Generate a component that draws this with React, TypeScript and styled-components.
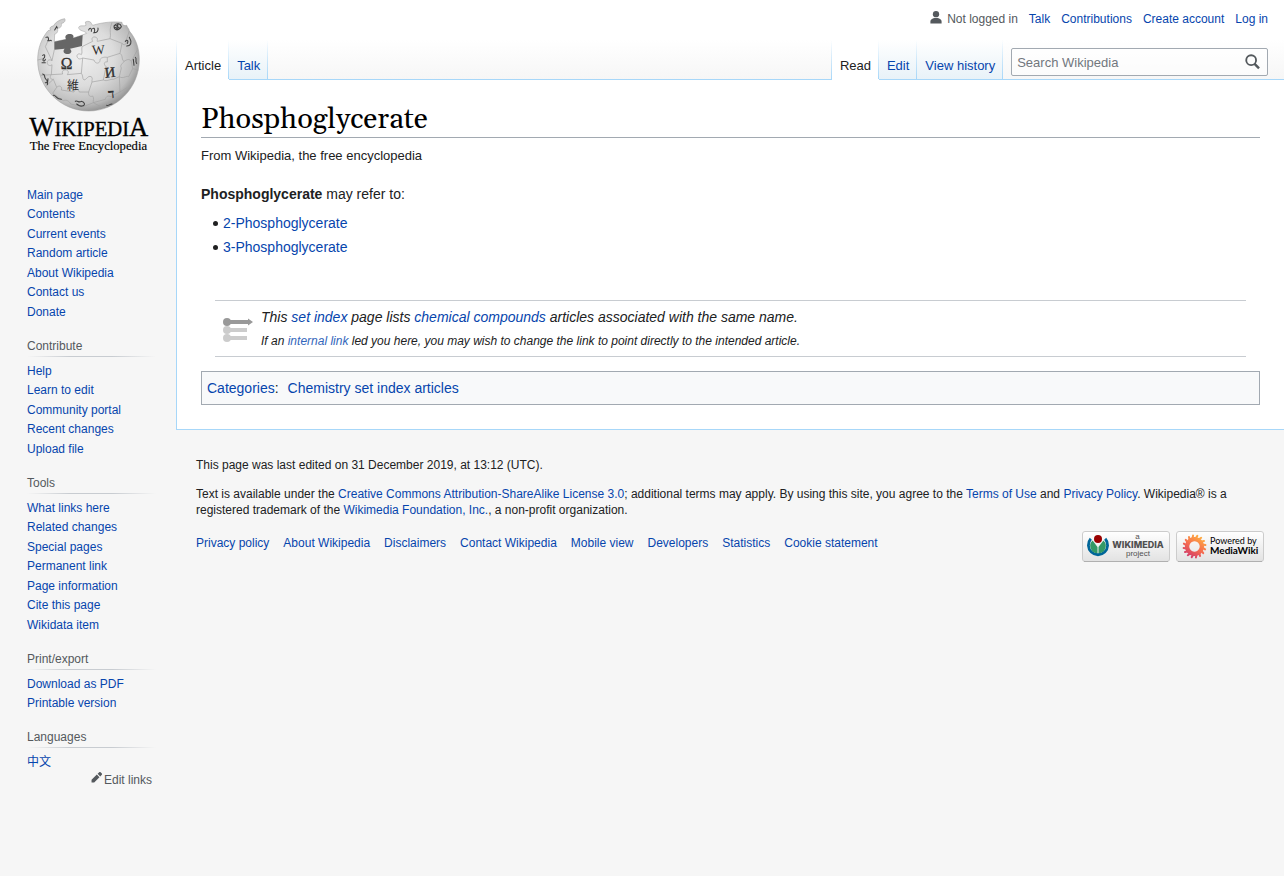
import React from "react";
import styled, { createGlobalStyle, css } from "styled-components";

const GlobalStyle = createGlobalStyle`
  body {
    margin: 0;
    background: #f6f6f6;
    color: #202122;
    font-family: "Liberation Sans", Arial, "Noto Sans CJK SC", sans-serif;
    font-size: 14px;
    line-height: 22px;
  }
`;

const Link = styled.a<{ $external?: boolean }>`
  color: ${(p) => (p.$external ? "#3366bb" : "#0645ad")};
  text-decoration: none;
  &:hover {
    text-decoration: underline;
  }
`;

const Page = styled.div`
  display: grid;
  grid-template-columns: 176px minmax(0, 1fr);
  align-items: start;
  min-height: 100vh;
  background: linear-gradient(#ffffff 50%, #f6f6f6 100%) 0 0 / 100% 80px no-repeat #f6f6f6;
`;

/* Sidebar */

const Sidebar = styled.aside`
  font-size: 12px;
  line-height: 16px;
`;

const LogoLink = styled.a`
  display: block;
  height: 160px;
  padding-left: 20px;
  margin-bottom: 25px;
`;

const Portal = styled.nav`
  margin: 0 20px 16px 27px;
`;

const PortalHeading = styled.h3`
  margin: 0 0 4px;
  padding-bottom: 3px;
  font-size: 12px;
  font-weight: 400;
  line-height: 16px;
  color: #54595d;
  background: linear-gradient(to right, rgba(200, 204, 209, 0), #c8ccd1 33%, #c8ccd1 66%, rgba(200, 204, 209, 0))
    bottom / 100% 1px no-repeat;
`;

const PortalList = styled.ul`
  list-style: none;
  margin: 0;
  padding: 0;
  li {
    line-height: 20px;
  }
  li:nth-child(even) {
    line-height: 19px;
  }
`;

const EditLinks = styled.div`
  display: flex;
  justify-content: flex-end;
  gap: 2px;
  margin-right: 4px;
  a {
    color: #54595d;
  }
`;

/* Header */

const Header = styled.header`
  display: flex;
  flex-direction: column;
  height: 80px;
`;

const PersonalTools = styled.ul`
  display: flex;
  justify-content: flex-end;
  gap: 11px;
  height: 29px;
  margin: 0;
  padding: 11px 16px 0 0;
  box-sizing: border-box;
  list-style: none;
  font-size: 12px;
  line-height: 16px;
`;

const AnonUser = styled.li`
  display: flex;
  gap: 4px;
  color: #54595d;
`;

const TabRow = styled.div`
  display: flex;
  flex: 1;
  align-items: stretch;
  padding-top: 11px;
`;

const fadeLine = css`linear-gradient(rgba(167, 215, 249, 0), #a7d7f9)`;

const TabList = styled.ul`
  display: flex;
  margin: 0;
  padding: 0 0 0 1px;
  list-style: none;
  background: ${fadeLine} left / 1px 100% no-repeat;
`;

const Tab = styled.li<{ $selected?: boolean }>`
  box-sizing: border-box;
  padding: 18px 8px 0;
  font-size: 13px;
  line-height: 16px;
  white-space: nowrap;
  border-bottom: 1px solid ${(p) => (p.$selected ? "#ffffff" : "#a7d7f9")};
  background: ${fadeLine} right / 1px 100% no-repeat,
    ${(p) => (p.$selected ? "linear-gradient(#ffffff, #ffffff)" : "linear-gradient(#ffffff, #e8f2f8)")};
  a {
    color: ${(p) => (p.$selected ? "#202122" : "#0645ad")};
  }
`;

const Spacer = styled.div`
  flex: 1;
  border-bottom: 1px solid #a7d7f9;
`;

const SearchArea = styled.form`
  padding: 8px 16px 0 8px;
  border-bottom: 1px solid #a7d7f9;
`;

const SearchBox = styled.div`
  display: flex;
  box-sizing: border-box;
  width: 20vw;
  height: 28px;
  border: 1px solid #a2a9b1;
  border-radius: 2px;
  background: rgba(255, 255, 255, 0.5);
`;

const SearchInput = styled.input`
  flex: 1;
  min-width: 0;
  padding: 0 5px;
  border: 0;
  outline: 0;
  background: transparent;
  font-family: inherit;
  font-size: 13px;
  color: #202122;
  &::placeholder {
    color: #72777d;
    opacity: 1;
  }
`;

const SearchButton = styled.button`
  display: flex;
  align-items: center;
  justify-content: center;
  width: 28px;
  padding: 0;
  border: 0;
  background: transparent;
  cursor: pointer;
`;

/* Article */

const Content = styled.main`
  padding: 20px 24px 24px;
  border: solid #a7d7f9;
  border-width: 0 0 1px 1px;
  background: #ffffff;
`;

const Title = styled.h1`
  margin: 0;
  padding-top: 2px;
  border-bottom: 1px solid #a2a9b1;
  font-family: Georgia, Gelasio, "Liberation Serif", serif;
  font-size: 29px;
  font-weight: 400;
  line-height: 35px;
  color: #000000;
`;

const SiteSub = styled.div`
  margin-top: 8px;
  font-size: 13px;
  line-height: 20px;
`;

const Paragraph = styled.p`
  margin: 17px 0 7px;
`;

const ArticleList = styled.ul`
  margin: 0;
  padding: 0 0 0 12px;
  list-style: none;
  li {
    display: flex;
    align-items: center;
    gap: 5px;
    margin-bottom: 2px;
  }
  li::before {
    content: "";
    width: 5px;
    height: 5px;
    border-radius: 50%;
    background: #202122;
  }
`;

const SetIndexNote = styled.div`
  display: flex;
  align-items: center;
  gap: 8px;
  margin: 42px 14px 14px;
  padding: 5px 8px 2px;
  border: solid #c8ccd1;
  border-width: 1px 0;
  font-style: italic;
`;

const NoteHint = styled.div`
  font-size: 12px;
  line-height: 26px;
`;

const Categories = styled.div`
  display: flex;
  gap: 9px;
  padding: 5px;
  border: 1px solid #a2a9b1;
  background: #f8f9fa;
`;

/* Footer */

const Footer = styled.footer`
  padding: 27px 20px 20px;
  font-size: 12px;
  line-height: 16px;
  p {
    margin: 0 0 13px;
  }
`;

const FooterRow = styled.div`
  display: flex;
  justify-content: space-between;
  align-items: flex-start;
`;

const FooterLinks = styled.ul`
  display: flex;
  flex-wrap: wrap;
  gap: 0 14px;
  margin: 0;
  padding: 4px 0 0;
  list-style: none;
`;

const Badges = styled.div`
  display: flex;
  gap: 6px;
  a {
    display: block;
    height: 31px;
  }
`;

function Logo() {
  return (
    <svg width="140" height="160" viewBox="0 0 420 480" role="img" aria-label="Wikipedia">
      <defs>
        <radialGradient id="globe" cx="0.42" cy="0.4" r="0.66">
          <stop offset="0" stopColor="#efefef" />
          <stop offset="0.5" stopColor="#dcdcdc" />
          <stop offset="0.8" stopColor="#bcbcbc" />
          <stop offset="1" stopColor="#808080" />
        </radialGradient>
      </defs>
      <path
        fill="url(#globe)"
        stroke="#9a9a9a"
        strokeWidth="1.5"
        d="M134 56 C138 62 132 70 124 70 C126 80 120 86 112 84 C116 94 110 102 104 102 L103 125 L138 118 L160 114 L184 106 L200 100 C196 92 176 94 176 82 C180 74 192 80 198 76 L196 66 C204 62 212 64 214 70 L218 76 C250 66 284 64 306 67 C306 76 314 78 320 76 C322 84 328 86 328 93 C348 116 358 146 358 178 C358 264 290 333 206 333 C122 333 53 264 53 180 C53 146 64 116 84 92 L92 90 C86 84 94 78 100 78 C106 66 120 58 134 56Z"
      />
      <path fill="#666666" d="M103 125 L138 118 C132 106 142 101 152 102 C162 104 161 111 160 114 L188 105 L186 138 L150 146 C160 156 150 163 140 162 C130 160 128 152 134 146 L103 149Z" />
      <g fill="none" stroke="#a2a2a2" strokeWidth="2">
        <path d="M103 149 L96 182 C88 176 80 182 82 190 C84 198 92 198 96 194 L94 224 L128 222 C124 212 132 208 140 210 C148 214 144 220 142 224 L184 220" />
        <path d="M186 140 C184 150 188 158 184 164 C176 158 168 164 172 172 C176 180 184 176 188 174 L184 220 C190 226 186 236 192 240 C202 238 202 226 214 230 C220 236 214 242 216 246 L250 240" />
        <path d="M186 140 L218 124 C212 114 220 108 228 112 C236 116 230 122 232 124 L270 116 C274 104 268 92 272 80 L276 67" />
        <path d="M188 174 L222 180 C226 194 240 190 240 182 C238 174 252 170 262 172 L300 160 L306 130 L270 116" />
        <path d="M306 130 C314 140 322 130 318 122 L328 93 M300 160 C310 168 304 180 312 184 C320 180 326 174 334 184 L352 150" />
        <path d="M250 240 L258 200 C250 192 252 184 262 186 L262 172 M250 240 C262 246 270 236 280 238 L298 230 L304 204 C298 194 310 190 312 184 M298 230 C310 238 318 226 326 230 L338 206 L334 184 M338 206 L355 210" />
        <path d="M94 224 C86 232 94 240 100 238 L110 262 C118 254 128 260 124 270 L162 276 C164 266 176 266 178 276 L206 276 L216 246" />
        <path d="M206 276 C204 286 210 292 218 288 C224 296 218 302 220 308 L256 298 C258 288 266 286 272 290 L300 276 L298 230 M110 262 L98 280 L130 302 C140 298 148 304 152 312 L190 320 L220 308 L246 322 M300 276 L322 262" />
        <path d="M53 180 L70 176 M96 182 L76 140 L86 118 M62 226 L94 224 M76 260 L100 238" />
      </g>
      <g fill="#303030" fontFamily="'Liberation Serif', 'DejaVu Serif', serif">
        <text x="122" y="206" fontSize="47" stroke="#303030">Ω</text>
        <text x="216" y="163" fontSize="41" transform="rotate(-4 236 150)">W</text>
        <text x="254" y="232" fontSize="44" stroke="#303030" transform="rotate(-6 270 216)">И</text>
        <text x="141" y="270" fontSize="36" fontFamily="'Noto Sans CJK JP', sans-serif">維</text>
        <text x="264" y="294" fontSize="40" fontWeight="700" transform="rotate(-6 276 280)">ד</text>
      </g>
      <g fill="none" stroke="#404040" strokeWidth="3.200" strokeLinecap="round">
        <path d="M206 90 C210 80 216 86 214 94 M218 86 C224 80 226 94 222 98 C230 98 236 94 234 84" />
        <path d="M284 76 C290 68 302 70 304 80 C300 88 292 92 286 88 C280 84 282 76 284 76 M288 76 L298 84 M294 72 L290 88 M284 82 L296 88" />
        <path d="M316 124 C322 116 326 124 322 130 M328 112 C336 126 334 138 320 138" />
        <path d="M78 112 C84 108 88 116 84 122 C90 124 92 118 94 122 M104 90 L110 80 L112 84" />
        <path d="M68 166 C76 160 76 172 70 176 C66 184 74 186 76 178 M66 188 L76 188" />
        <path d="M68 222 C78 222 70 232 78 238 C84 242 82 250 76 248 M84 236 L82 254" />
        <path d="M346 172 C352 176 344 184 350 190 M340 178 L342 196" />
        <path d="M166 304 C174 300 174 310 184 304 C194 306 198 316 186 318 C178 320 174 314 170 312" />
        <path d="M100 286 C108 286 108 294 116 296 L124 298 M260 316 C266 318 268 312 276 312" />
      </g>
      <g fill="#000000" stroke="#000000" strokeWidth="1" fontFamily="'Liberation Serif', serif">
        <text x="28" y="408" fontSize="80">
          W<tspan fontSize="62">IKIPEDI</tspan>A
        </text>
        <text x="29" y="450" fontSize="38" strokeWidth="0.500">The Free Encyclopedia</text>
      </g>
    </svg>
  );
}

function UserIcon() {
  return (
    <svg width="14" height="14" viewBox="0 0 20 20" fill="#54595d" aria-hidden="true">
      <path d="M10 10c-5.900 0-8 3-8 5v3h16v-3c0-2-2.100-5-8-5z" />
      <circle cx="10" cy="4.500" r="4.500" />
    </svg>
  );
}

function SearchIcon() {
  return (
    <svg width="16" height="16" viewBox="0 0 13 13" fill="none" stroke="#54595d" strokeWidth="1.500" aria-hidden="true">
      <path d="M11.400 11.600 7.600 7.800" strokeWidth="2" />
      <circle cx="5" cy="5" r="4" />
    </svg>
  );
}

function PencilIcon() {
  return (
    <svg width="11" height="11" viewBox="0 0 20 20" fill="#54595d" aria-hidden="true">
      <path d="M16.800 8 19.300 5.500a2.400 2.400 0 0 0 0-3.400L17.900.700a2.400 2.400 0 0 0-3.400 0L12 3.200zM10.600 4.600 1 14.200V19h4.800l9.600-9.600z" />
    </svg>
  );
}

function SetIndexIcon() {
  return (
    <svg width="30" height="24" viewBox="0 0 30 24" aria-hidden="true">
      <g fill="#cccccc">
        <circle cx="4" cy="12" r="4" />
        <path d="M4 10h20v4H4z" />
        <circle cx="4" cy="20" r="4" />
        <path d="M4 18h20v4H4z" />
      </g>
      <g fill="#999999">
        <circle cx="4" cy="4" r="4" />
        <path d="M4 2h21V0.500L30 4l-5 3.500V6H4z" />
      </g>
    </svg>
  );
}

function BadgeFrame() {
  return (
    <>
      <defs>
        <linearGradient id="badge" x1="0" y1="0" x2="0" y2="1">
          <stop offset="0" stopColor="#ffffff" />
          <stop offset="1" stopColor="#e2e2e2" />
        </linearGradient>
      </defs>
      <rect x="0.500" y="0.500" width="87" height="30" rx="2.500" fill="url(#badge)" stroke="#cccccc" />
      <path d="M2 30.500h84" stroke="#b0b0b0" />
    </>
  );
}

function WikimediaBadge() {
  return (
    <svg width="88" height="31" viewBox="0 0 88 31" role="img" aria-label="Wikimedia Foundation">
      <BadgeFrame />
      <path d="M8.800 7.800a9.600 9.600 0 1 0 14.400 0" fill="none" stroke="#006699" strokeWidth="2.800" />
      <path d="M10.600 9.500a7.300 7.300 0 0 0 4.900 12.700V16zM21.400 9.500a7.300 7.300 0 0 1-4.900 12.700V16z" fill="#339966" />
      <circle cx="16" cy="8" r="4" fill="#990000" />
      <g fill="#505050" textAnchor="middle">
        <text x="55.500" y="7.500" fontFamily="'Liberation Sans', sans-serif" fontSize="8">a</text>
        <text x="56" y="16.500" fontFamily="Inter, sans-serif" fontWeight="800" fontSize="9">WIKIMEDIA</text>
        <text x="56" y="25" fontFamily="'Liberation Sans', sans-serif" fontSize="8">project</text>
      </g>
    </svg>
  );
}

function MediaWikiBadge() {
  const petals = Array.from({ length: 16 }, (_, i) => i * 22.5);
  return (
    <svg width="88" height="31" viewBox="0 0 88 31" role="img" aria-label="Powered by MediaWiki">
      <BadgeFrame />
      <defs>
        <linearGradient id="flower" gradientUnits="userSpaceOnUse" x1="24" y1="4" x2="10" y2="27">
          <stop offset="0" stopColor="#ffb340" />
          <stop offset="0.500" stopColor="#f56b50" />
          <stop offset="1" stopColor="#c83070" />
        </linearGradient>
      </defs>
      <path fill="url(#flower)" fillRule="evenodd" d="M18.500 5.900a9.600 9.600 0 1 0 0.010 0zM18.500 10.300a5.200 5.200 0 1 1-0.010 0z" />
      <g stroke="url(#flower)" strokeWidth="2" strokeLinecap="round">
        {petals.map((a) => {
          const r = ((a + 8) * Math.PI) / 180;
          return (
            <line
              key={a}
              x1={18.5 + 8 * Math.cos(r)}
              y1={15.5 + 8 * Math.sin(r)}
              x2={18.5 + 11 * Math.cos(r + 0.12)}
              y2={15.5 + 11 * Math.sin(r + 0.12)}
            />
          );
        })}
      </g>
      <g fill="#000000" fontFamily="Lato, sans-serif">
        <text x="34" y="13" fontSize="9">Powered by</text>
        <text x="34" y="23" fontSize="10" fontWeight="700">MediaWiki</text>
      </g>
    </svg>
  );
}

const portals: { title?: string; items: string[] }[] = [
  {
    items: ["Main page", "Contents", "Current events", "Random article", "About Wikipedia", "Contact us", "Donate"],
  },
  { title: "Contribute", items: ["Help", "Learn to edit", "Community portal", "Recent changes", "Upload file"] },
  {
    title: "Tools",
    items: [
      "What links here",
      "Related changes",
      "Special pages",
      "Permanent link",
      "Page information",
      "Cite this page",
      "Wikidata item",
    ],
  },
  { title: "Print/export", items: ["Download as PDF", "Printable version"] },
  { title: "Languages", items: ["中文"] },
];

const footerLinks = [
  "Privacy policy",
  "About Wikipedia",
  "Disclaimers",
  "Contact Wikipedia",
  "Mobile view",
  "Developers",
  "Statistics",
  "Cookie statement",
];

export default function App() {
  return (
    <>
      <GlobalStyle />
      <Page>
        <Sidebar>
          <LogoLink href="#">
            <Logo />
          </LogoLink>
          {portals.map((portal) => (
            <Portal key={portal.title ?? "main"} aria-label={portal.title ?? "Navigation"}>
              {portal.title && <PortalHeading>{portal.title}</PortalHeading>}
              <PortalList>
                {portal.items.map((item) => (
                  <li key={item}>
                    <Link href="#">{item}</Link>
                  </li>
                ))}
              </PortalList>
              {portal.title === "Languages" && (
                <EditLinks>
                  <PencilIcon />
                  <Link href="#">Edit links</Link>
                </EditLinks>
              )}
            </Portal>
          ))}
        </Sidebar>
        <div>
          <Header>
            <PersonalTools>
              <AnonUser>
                <UserIcon />
                Not logged in
              </AnonUser>
              {["Talk", "Contributions", "Create account", "Log in"].map((item) => (
                <li key={item}>
                  <Link href="#">{item}</Link>
                </li>
              ))}
            </PersonalTools>
            <TabRow>
              <TabList>
                <Tab $selected>
                  <Link href="#">Article</Link>
                </Tab>
                <Tab>
                  <Link href="#">Talk</Link>
                </Tab>
              </TabList>
              <Spacer />
              <TabList>
                <Tab $selected>
                  <Link href="#">Read</Link>
                </Tab>
                <Tab>
                  <Link href="#">Edit</Link>
                </Tab>
                <Tab>
                  <Link href="#">View history</Link>
                </Tab>
              </TabList>
              <SearchArea role="search">
                <SearchBox>
                  <SearchInput type="search" placeholder="Search Wikipedia" aria-label="Search Wikipedia" />
                  <SearchButton type="submit" aria-label="Go">
                    <SearchIcon />
                  </SearchButton>
                </SearchBox>
              </SearchArea>
            </TabRow>
          </Header>
          <Content>
            <Title>Phosphoglycerate</Title>
            <SiteSub>From Wikipedia, the free encyclopedia</SiteSub>
            <Paragraph>
              <b>Phosphoglycerate</b> may refer to:
            </Paragraph>
            <ArticleList>
              <li>
                <Link href="#">2-Phosphoglycerate</Link>
              </li>
              <li>
                <Link href="#">3-Phosphoglycerate</Link>
              </li>
            </ArticleList>
            <SetIndexNote>
              <SetIndexIcon />
              <div>
                <div>
                  This <Link href="#">set index</Link> page lists <Link href="#">chemical compounds</Link> articles
                  associated with the same name.
                </div>
                <NoteHint>
                  If an{" "}
                  <Link href="#" $external>
                    internal link
                  </Link>{" "}
                  led you here, you may wish to change the link to point directly to the intended article.
                </NoteHint>
              </div>
            </SetIndexNote>
            <Categories>
              <span>
                <Link href="#">Categories</Link>:
              </span>
              <Link href="#">Chemistry set index articles</Link>
            </Categories>
          </Content>
          <Footer>
            <p>This page was last edited on 31 December 2019, at 13:12 (UTC).</p>
            <p>
              Text is available under the <Link href="#">Creative Commons Attribution-ShareAlike License 3.0</Link>;
              additional terms may apply. By using this site, you agree to the <Link href="#">Terms of Use</Link> and{" "}
              <Link href="#">Privacy Policy</Link>. Wikipedia® is a registered trademark of the{" "}
              <Link href="#">Wikimedia Foundation, Inc.</Link>, a non-profit organization.
            </p>
            <FooterRow>
              <FooterLinks>
                {footerLinks.map((item) => (
                  <li key={item}>
                    <Link href="#">{item}</Link>
                  </li>
                ))}
              </FooterLinks>
              <Badges>
                <a href="#">
                  <WikimediaBadge />
                </a>
                <a href="#">
                  <MediaWikiBadge />
                </a>
              </Badges>
            </FooterRow>
          </Footer>
        </div>
      </Page>
    </>
  );
}
